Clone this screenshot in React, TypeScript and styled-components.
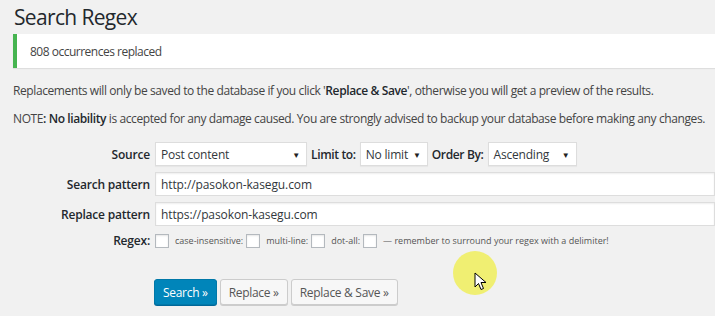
import styled, { createGlobalStyle } from "styled-components";

const Global = createGlobalStyle`
  html, body {
    margin: 0;
    padding: 0;
    background: #f1f1f1;
  }
  body {
    font-family: "Open Sans", "Noto Sans", sans-serif;
    color: #444;
    width: 715px;
    height: 316px;
    overflow: hidden;
  }
`;

const Page = styled.div`
  position: relative;
  padding: 3px 0 0 13px;
  height: 316px;
  box-sizing: border-box;
`;

const Title = styled.h1`
  margin: 0 0 0 1px;
  font-size: 21px;
  font-weight: 400;
  line-height: 29px;
  color: #23282d;
  letter-spacing: -0.65px;
`;

const Notice = styled.div`
  margin-top: 2px;
  height: 34px;
  display: flex;
  align-items: center;
  background: #fff;
  border-left: 4px solid #46b450;
  box-shadow: 0 1px 1px rgba(0, 0, 0, 0.08);
  padding-left: 13px;
  font-size: 12px;
  letter-spacing: -0.5px;
`;

const Para = styled.p`
  margin: 0;
  font-size: 12px;
  line-height: 28px;
  letter-spacing: -0.4px;
  white-space: nowrap;
  color: #444;
  & b {
    color: #23282d;
    font-weight: 600;
  }
`;

const Paras = styled.div`
  margin-top: 9px;
`;

const Form = styled.div`
  margin-top: 9px;
  display: grid;
  grid-template-columns: 137px 1fr;
  column-gap: 5px;
  row-gap: 6px;
  align-items: center;
`;

const Label = styled.div`
  text-align: right;
  font-size: 12px;
  font-weight: 600;
  color: #23282d;
  letter-spacing: -0.2px;
`;

const Inline = styled.div`
  display: flex;
  align-items: center;
  gap: 4px;
`;

const Select = styled.div<{ w: number }>`
  width: ${({ w }) => w}px;
  height: 24px;
  box-sizing: border-box;
  display: flex;
  align-items: center;
  justify-content: space-between;
  padding: 0 6px 0 5px;
  background: #fff;
  border: 1px solid #ddd;
  box-shadow: 0 1px 1px rgba(0, 0, 0, 0.04);
  font-size: 12px;
  letter-spacing: -0.2px;
  color: #32373c;
  & span {
    font-size: 8px;
    color: #222;
  }
`;

const SmallLabel = styled.div`
  font-size: 12px;
  font-weight: 600;
  color: #23282d;
  letter-spacing: -0.35px;
`;

const Input = styled.input`
  width: 100%;
  height: 24px;
  box-sizing: border-box;
  border: 1px solid #ddd;
  box-shadow: inset 0 1px 2px rgba(0, 0, 0, 0.07);
  background: #fff;
  font-family: "Open Sans", "Noto Sans", sans-serif;
  font-size: 12px;
  letter-spacing: -0.1px;
  color: #32373c;
  padding: 0 5px;
  outline: none;
`;

const Check = styled.span`
  display: inline-block;
  width: 14px;
  height: 14px;
  box-sizing: border-box;
  border: 1px solid #b4b9be;
  background: #fff;
  box-shadow: inset 0 1px 2px rgba(0, 0, 0, 0.1);
`;

const Tiny = styled.span`
  font-size: 9px;
  color: #555;
  margin: 0 -1px 0 2px;
  white-space: nowrap;
`;

const Buttons = styled.div`
  display: flex;
  gap: 3px;
  margin: 30px 0 0 141px;
`;

const Button = styled.button<{ primary?: boolean }>`
  height: 26px;
  padding: 0 8px;
  font-family: "Open Sans", "Noto Sans", sans-serif;
  font-size: 12px;
  letter-spacing: -0.3px;
  border-radius: 3px;
  border: 1px solid ${({ primary }) => (primary ? "#0078a8" : "#ccc")};
  background: ${({ primary }) => (primary ? "#0085ba" : "#f7f7f7")};
  color: ${({ primary }) => (primary ? "#fff" : "#555")};
  box-shadow: ${({ primary }) => (primary ? "0 1px 0 #006799" : "0 1px 0 #ccc")};
`;

const Cursor = styled.div`
  position: absolute;
  left: 453px;
  top: 251px;
  width: 44px;
  height: 44px;
  border-radius: 50%;
  background: rgba(240, 238, 100, 0.9);
`;

const Pointer = styled.svg`
  position: absolute;
  left: 474px;
  top: 272px;
`;

export default function App() {
  return (
    <Page>
      <Global />
      <Title>Search Regex</Title>
      <Notice>808 occurrences replaced</Notice>
      <Paras>
        <Para>
          Replacements will only be saved to the database if you click '<b>Replace &amp; Save</b>', otherwise you will get a preview of the results.
        </Para>
        <Para>
          NOTE<b>: No liability</b> is accepted for any damage caused. You are strongly advised to backup your database before making any changes.
        </Para>
      </Paras>
      <Form>
        <Label>Source</Label>
        <Inline>
          <Select w={152}>
            Post content<span>▼</span>
          </Select>
          <SmallLabel>Limit to:</SmallLabel>
          <Select w={68}>
            No limit<span>▼</span>
          </Select>
          <SmallLabel>Order By:</SmallLabel>
          <Select w={89}>
            Ascending<span>▼</span>
          </Select>
        </Inline>
        <Label>Search pattern</Label>
        <Input readOnly value="http://pasokon-kasegu.com" />
        <Label>Replace pattern</Label>
        <Input readOnly value="https://pasokon-kasegu.com" />
        <Label>Regex:</Label>
        <Inline>
          <Check />
          <Tiny>case-insensitive:</Tiny>
          <Check />
          <Tiny>multi-line:</Tiny>
          <Check />
          <Tiny>dot-all:</Tiny>
          <Check />
          <Tiny>— remember to surround your regex with a delimiter!</Tiny>
        </Inline>
      </Form>
      <Buttons>
        <Button primary>Search »</Button>
        <Button>Replace »</Button>
        <Button>Replace &amp; Save »</Button>
      </Buttons>
      <Cursor />
      <Pointer width="14" height="20" viewBox="0 0 14 20">
        <path d="M1 1 L1 15 L4.5 11.5 L7 17.5 L9.5 16.5 L7 10.5 L12 10.5 Z" fill="#fff" stroke="#000" strokeWidth="1" strokeLinejoin="round" />
      </Pointer>
    </Page>
  );
}
